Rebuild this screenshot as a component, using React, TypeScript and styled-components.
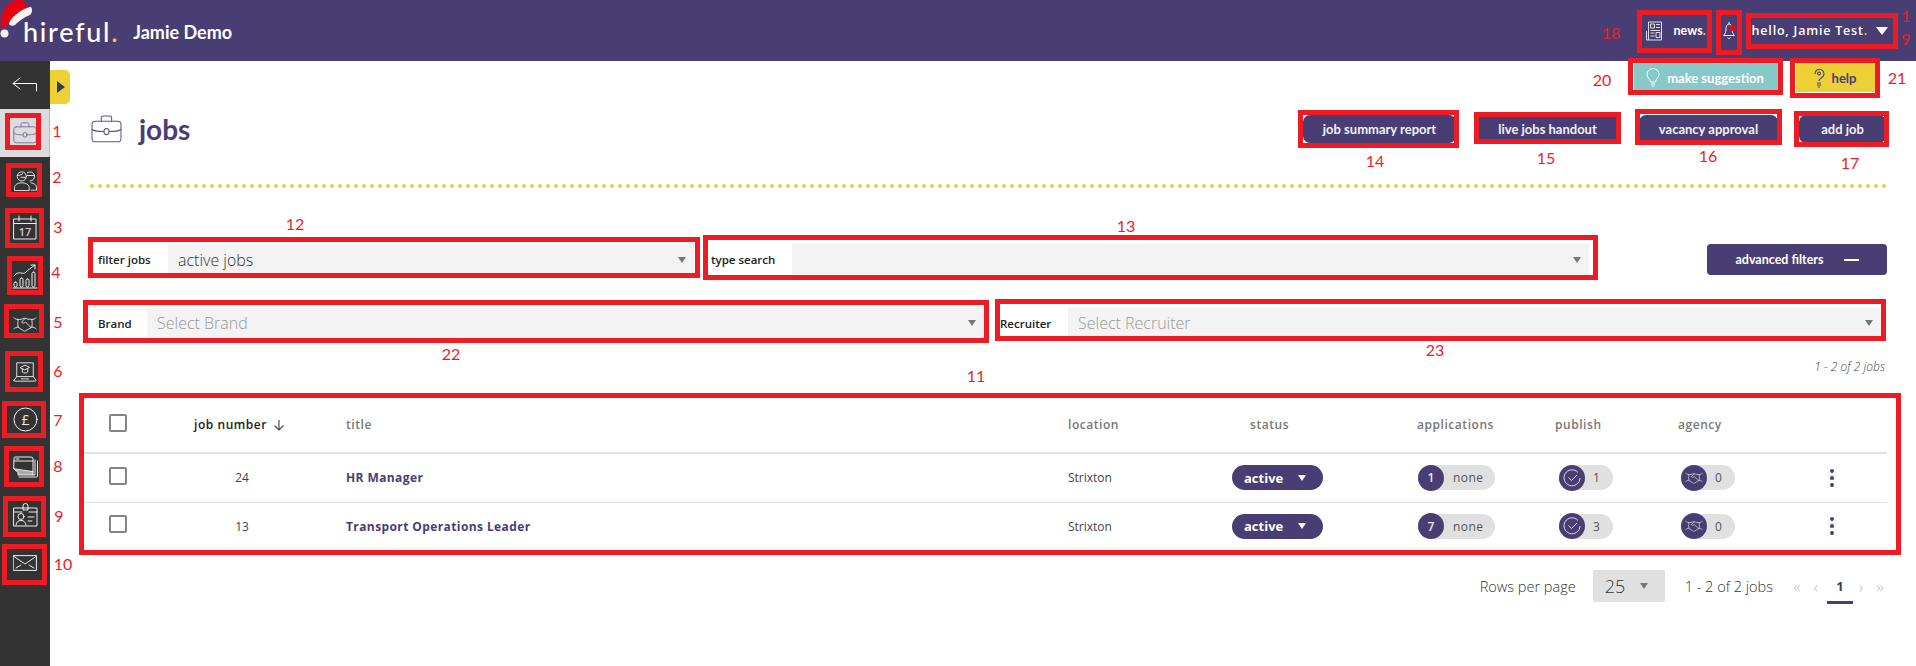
import styled, { createGlobalStyle } from "styled-components";

const PURPLE = "#493e74";
const YELLOW = "#edd035";
const RED = "#ed1c24";

const GlobalStyle = createGlobalStyle`
  html, body {
    margin: 0;
    height: 100%;
    overflow: hidden;
    background: #fff;
    font-family: "Open Sans", "Liberation Sans", sans-serif;
  }
`;

const Page = styled.div`
  position: relative;
  width: 1916px;
  height: 666px;
  overflow: hidden;
  display: flex;
  flex-direction: column;
`;

const Header = styled.header`
  height: 61px;
  background: ${PURPLE};
  display: flex;
  align-items: center;
  color: #fff;
  flex: none;
`;

const Logo = styled.div`
  margin-left: 23px;
  font-family: Lato, sans-serif;
  font-size: 27px;
  letter-spacing: 1.7px;
  line-height: 1;
  font-weight: 500;
  padding-top: 2px;
  span { color: ${YELLOW}; }
`;

const Company = styled.div`
  margin-left: 14px;
  padding-top: 2px;
  font-family: Lato, sans-serif;
  font-size: 18px;
  font-weight: 700;
`;

const News = styled.div`
  margin-left: auto;
  display: flex;
  align-items: center;
  gap: 12px;
  font-family: Lato, sans-serif;
  font-size: 12.5px;
  font-weight: 700;
  span { color: ${YELLOW}; }
`;

const Bell = styled.div`
  position: relative;
  margin-left: 17px;
  display: flex;
`;

const BellDot = styled.i`
  position: absolute;
  right: -1px;
  top: 4px;
  width: 6px;
  height: 6px;
  border-radius: 50%;
  background: #f00;
`;

const Hello = styled.div`
  margin: 0 28px 0 17px;
  display: flex;
  align-items: center;
  gap: 8px;
  font-family: "Open Sans", sans-serif;
  font-size: 12.5px;
  font-weight: 600;
  letter-spacing: 0.8px;
  span { color: ${YELLOW}; }
`;

const HelloCaret = styled.i`
  border-left: 6.5px solid transparent;
  border-right: 6.5px solid transparent;
  border-top: 8px solid #fff;
`;

const Body = styled.div`
  flex: 1;
  display: flex;
  min-height: 0;
`;

const Sidebar = styled.nav`
  width: 50px;
  flex: none;
  background: #333;
  display: flex;
  flex-direction: column;
`;

const BackItem = styled.div`
  height: 48px;
  display: flex;
  align-items: center;
  justify-content: center;
`;

const NavItem = styled.div<{ $active?: boolean }>`
  height: 47.8px;
  display: flex;
  align-items: center;
  justify-content: center;
  color: ${(p) => (p.$active ? "#6a6094" : "#eee")};
  background: ${(p) => (p.$active ? "#dcdcdc" : "transparent")};
  border-right: ${(p) => (p.$active ? "1px solid #bbb" : "none")};
`;

const Main = styled.main`
  position: relative;
  flex: 1;
  padding: 2px 30px 0 41px;
`;

const SideToggle = styled.div`
  position: absolute;
  left: 0;
  top: 9px;
  width: 20px;
  height: 34px;
  background: ${YELLOW};
  border-radius: 0 5px 5px 0;
  display: flex;
  align-items: center;
  justify-content: center;
  &::before {
    content: "";
    border-left: 8px solid #2c3e50;
    border-top: 6px solid transparent;
    border-bottom: 6px solid transparent;
    margin-left: 2px;
  }
`;

const TopActions = styled.div`
  display: flex;
  justify-content: flex-end;
  gap: 17px;
  height: 29px;
  margin-right: 11px;
`;

const TopButton = styled.div<{ $bg: string; $fg: string; $w: number }>`
  width: ${(p) => p.$w}px;
  height: 29px;
  background: ${(p) => p.$bg};
  color: ${(p) => p.$fg};
  display: flex;
  align-items: center;
  justify-content: center;
  gap: 7px;
  padding-right: 3px;
  box-sizing: border-box;
  font-family: Lato, sans-serif;
  font-size: 13px;
  font-weight: 700;
`;

const TitleRow = styled.div`
  display: flex;
  align-items: center;
  height: 28px;
  margin-top: 23px;
  color: #5b5189;
`;

const PageTitle = styled.h1`
  margin: 0 0 0 17px;
  font-family: Lato, sans-serif;
  font-size: 28px;
  font-weight: 700;
  color: ${PURPLE};
`;

const Actions = styled.div`
  margin-left: auto;
  display: flex;
  gap: 21px;
  margin-right: 1px;
`;

const ActionButton = styled.div<{ $w: number }>`
  width: ${(p) => p.$w}px;
  height: 28px;
  border-radius: 7px;
  background: ${PURPLE};
  color: #f1f0f5;
  display: flex;
  align-items: center;
  justify-content: center;
  font-family: Lato, sans-serif;
  font-size: 13px;
  font-weight: 700;
`;

const Dots = styled.div`
  height: 4px;
  margin-top: 41px;
  margin-left: -1px;
  background-image: radial-gradient(circle at 2px 2px, ${YELLOW} 1.8px, transparent 2.1px);
  background-size: 8px 4px;
  background-repeat: repeat-x;
`;

const FilterRow = styled.div<{ $top: number; $left: number }>`
  display: flex;
  align-items: stretch;
  height: ${(p) => (p.$top > 40 ? 31 : 30)}px;
  margin-top: ${(p) => p.$top}px;
  margin-left: ${(p) => p.$left}px;
`;

const Field = styled.div<{ $w: number; $gap?: number }>`
  width: ${(p) => p.$w}px;
  margin-right: ${(p) => p.$gap ?? 0}px;
  display: flex;
  flex: none;
`;

const FieldLabel = styled.label<{ $w: number; $pad: number }>`
  width: ${(p) => p.$w}px;
  padding-left: ${(p) => p.$pad}px;
  box-sizing: border-box;
  flex: none;
  display: flex;
  align-items: center;
  font-size: 11.5px;
  font-weight: 600;
  color: #222;
  white-space: nowrap;
`;

const FieldValue = styled.div<{ $muted?: boolean }>`
  flex: 1;
  background: #f3f3f3;
  display: flex;
  align-items: center;
  justify-content: space-between;
  padding: 0 8px 0 10px;
  font-size: 16px;
  font-weight: 300;
  color: ${(p) => (p.$muted ? "#999" : "#333")};
`;

const Caret = styled.i<{ $color?: string }>`
  border-left: 4.5px solid transparent;
  border-right: 4.5px solid transparent;
  border-top: 6px solid ${(p) => p.$color ?? "#777"};
`;

const AdvancedButton = styled.div`
  margin-left: auto;
  width: 180px;
  height: 31px;
  border-radius: 4px;
  background: ${PURPLE};
  color: #fff;
  display: flex;
  align-items: center;
  justify-content: center;
  gap: 20px;
  font-family: Lato, sans-serif;
  font-size: 12.5px;
  font-weight: 700;
  &::after {
    content: "";
    width: 15px;
    height: 2px;
    background: #fff;
  }
`;

const Summary = styled.div`
  margin-top: 21px;
  text-align: right;
  font-size: 12px;
  font-style: italic;
  font-weight: 300;
  color: #444;
  line-height: 15px;
  margin-right: 2px;
`;

const Table = styled.div`
  margin: 23px 0 0 -7px;
  width: 1803px;
`;

const Row = styled.div<{ $head?: boolean }>`
  display: grid;
  grid-template-columns: 110px 152px 722px 164px 185px 138px 123px 152px 57px;
  align-items: center;
  height: ${(p) => (p.$head ? 55 : 47.5)}px;
  border-bottom: ${(p) => (p.$head ? "2px" : "1.5px")} solid #e2e2e2;
  font-size: 12px;
  color: #444;
  &:last-child { border-bottom: none; }
`;

const CheckCell = styled.div`
  padding-left: 25px;
  display: flex;
`;

const Check = styled.span`
  width: 14px;
  height: 14px;
  border: 2px solid #848484;
  border-radius: 2px;
  margin-bottom: 4px;
`;

const Head = styled.div<{ $dark?: boolean; $pad?: number }>`
  font-weight: 600;
  letter-spacing: 0.55px;
  color: ${(p) => (p.$dark ? "#222" : "#777")};
  padding-left: ${(p) => p.$pad ?? 0}px;
  white-space: nowrap;
  display: flex;
  align-items: center;
  gap: 6px;
`;

const NumberCell = styled.div`
  width: 96px;
  text-align: center;
`;

const TitleCell = styled.div`
  font-weight: 700;
  letter-spacing: 0.4px;
  color: ${PURPLE};
`;

const StatusPill = styled.div`
  width: 91px;
  height: 25px;
  border-radius: 13px;
  background: ${PURPLE};
  color: #fff;
  box-sizing: border-box;
  padding: 0 17px 0 12px;
  display: flex;
  align-items: center;
  justify-content: space-between;
  font-size: 13px;
  font-weight: 700;
`;

const Pill = styled.div<{ $w: number; $left?: number }>`
  width: ${(p) => p.$w}px;
  margin-left: ${(p) => p.$left ?? 0}px;
  height: 25px;
  border-radius: 13px;
  background: #e0e0e0;
  display: flex;
  align-items: center;
  color: #555;
`;

const PillBadge = styled.div`
  width: 26px;
  height: 26px;
  border-radius: 50%;
  background: ${PURPLE};
  color: #e8e6f0;
  flex: none;
  display: flex;
  align-items: center;
  justify-content: center;
  font-weight: 600;
`;

const PillText = styled.span<{ $gap: number }>`
  margin-left: ${(p) => p.$gap}px;
  letter-spacing: 0.4px;
`;

const Kebab = styled.div`
  display: flex;
  flex-direction: column;
  gap: 3px;
  width: 4px;
  i {
    width: 4px;
    height: 4px;
    border-radius: 50%;
    background: ${PURPLE};
  }
`;

const Footer = styled.div`
  display: flex;
  align-items: center;
  justify-content: flex-end;
  margin-top: 20px;
  height: 32px;
  margin-right: -4px;
  font-size: 14.5px;
  font-weight: 300;
  color: #333;
`;

const RowsSelect = styled.div`
  width: 72px;
  height: 32px;
  margin: 0 20px 0 17px;
  box-sizing: border-box;
  padding: 0 17px 0 12px;
  border-radius: 2px;
  background: #e0e0e0;
  display: flex;
  align-items: center;
  justify-content: space-between;
  font-size: 18px;
`;

const Pager = styled.div`
  margin-left: 17px;
  display: flex;
  align-items: center;
  height: 32px;
  color: #bdbdbd;
  font-size: 17px;
`;

const PagerArrow = styled.span<{ $w: number }>`
  width: ${(p) => p.$w}px;
  text-align: center;
`;

const PagerCurrent = styled.span`
  position: relative;
  width: 26px;
  margin-left: -1px;
  text-align: center;
  font-size: 13px;
  font-weight: 700;
  color: #444;
  &::after {
    content: "";
    position: absolute;
    left: 0;
    right: 0;
    top: 24px;
    height: 3px;
    background: ${PURPLE};
  }
`;

const HatSvg = styled.svg`
  position: absolute;
  left: 0;
  top: 0;
`;

const MarkBox = styled.div<{ $x: number; $y: number; $r: number; $b: number }>`
  position: absolute;
  left: ${(p) => p.$x}px;
  top: ${(p) => p.$y}px;
  width: ${(p) => p.$r - p.$x}px;
  height: ${(p) => p.$b - p.$y}px;
  box-sizing: border-box;
  border: 5px solid ${RED};
  pointer-events: none;
`;

const MarkNumber = styled.span<{ $x: number; $y: number }>`
  position: absolute;
  left: ${(p) => p.$x}px;
  top: ${(p) => p.$y}px;
  transform: translate(-50%, -50%);
  font-family: Lato, sans-serif;
  font-size: 16px;
  line-height: 1;
  color: ${RED};
`;

const boxes = [
  [5, 113, 41, 150], [6, 163, 42, 197], [5, 208, 44, 248], [7, 256, 43, 295], [4, 304, 44, 338],
  [5, 351, 43, 392], [2, 401, 46, 438], [4, 446, 44, 487], [3, 496, 46, 537], [2, 544, 47, 585],
  [79, 393, 1901, 555], [88, 237, 700, 278], [703, 235, 1598, 280], [83, 300, 989, 343], [995, 299, 1886, 341],
  [1298, 110, 1459, 148], [1474, 112, 1621, 144], [1635, 109, 1782, 145], [1794, 111, 1889, 147],
  [1637, 10, 1712, 53], [1716, 10, 1742, 55], [1746, 13, 1898, 49], [1628, 58, 1783, 95], [1790, 58, 1880, 98],
];

const numbers: [string, number, number][] = [
  ["1", 57, 131], ["2", 57, 177], ["3", 58, 227], ["4", 56, 272], ["5", 58, 322], ["6", 58, 371],
  ["7", 58, 420], ["8", 58, 466], ["9", 59, 516], ["10", 63, 564], ["11", 976, 376], ["12", 295, 224],
  ["13", 1126, 226], ["14", 1375, 161], ["15", 1546, 158], ["16", 1708, 156], ["17", 1850, 163],
  ["18", 1611, 33], ["1", 1906, 16], ["9", 1906, 39], ["20", 1602, 80], ["21", 1897, 78], ["22", 451, 354], ["23", 1435, 350],
];

const strokeProps = {
  fill: "none",
  stroke: "currentColor",
  strokeWidth: 1,
  strokeLinecap: "round" as const,
  strokeLinejoin: "round" as const,
};

function BackArrow() {
  return (
    <svg width="26" height="16" viewBox="0 0 26 16" color="#fff" {...strokeProps}>
      <path d="M8 1 1 6.5 8 12M1 6.5h23.5V14" />
    </svg>
  );
}

function Briefcase({ size = 24 }: { size?: number }) {
  return (
    <svg width={size} height={size * 0.9} viewBox="0 0 30 27" {...strokeProps}>
      <path d="M10 6V3a2 2 0 0 1 2-2h6a2 2 0 0 1 2 2v3" />
      <rect x="1" y="6" width="28" height="20" rx="3" />
      <path d="M1 14c2 1.5 5 2 11.5 2M17.500 16c6.500 0 9.500-.5 11.500-2" />
      <ellipse cx="15" cy="16" rx="2.500" ry="3" />
    </svg>
  );
}

function People() {
  return (
    <svg width="25" height="22" viewBox="0 0 26 24" {...strokeProps}>
      <circle cx="9" cy="7" r="5" />
      <path d="M4 6c3 0 5-1 6-2M8 8h5" />
      <path d="M1 22v-3c0-3 4-5 8-5s8 2 8 5v3z" />
      <path d="M15 3a5 5 0 1 1 3 9M15 6h7" />
      <path d="M19 14c3 .5 6 2 6 5v3h-6" />
    </svg>
  );
}

function Calendar() {
  return (
    <svg width="26" height="26" viewBox="0 0 26 26" {...strokeProps}>
      <rect x="2" y="4" width="22" height="20" />
      <path d="M2 8.500h22M7 1v5M19 1v5" />
      <text x="13" y="21" textAnchor="middle" fontFamily="Open Sans" fontSize="11" fontWeight="600" fill="#ccc" stroke="none">17</text>
    </svg>
  );
}

function Chart() {
  return (
    <svg width="26" height="25" viewBox="0 0 26 25" {...strokeProps}>
      <path d="M1 24h24" />
      <rect x="2" y="18" width="3" height="5" rx="1.500" />
      <rect x="8" y="14" width="3" height="9" rx="1.500" />
      <rect x="14" y="15" width="3" height="8" rx="1.500" />
      <rect x="20" y="8" width="3" height="15" rx="1.500" />
      <path d="M2 12c3-4 5-3 7-3s3 1 5-1 5-4 9-7M19 1h4v4" />
    </svg>
  );
}

function Handshake({ size = 24 }: { size?: number }) {
  return (
    <svg width={size} height={size * 0.68} viewBox="0 0 28 19" {...strokeProps}>
      <path d="M1 2c1.500 1.500 3 2 5 2-.5 3-.5 6 0 9-2 0-3.500.5-5 2" />
      <path d="M27 2c-1.500 1.500-3 2-5 2 .5 3 .5 6 0 9 2 0 3.500.5 5 2" />
      <path d="M6 4c3 0 4 0 7-1.500 3 1 6 1.500 9 1.500" />
      <path d="M14 3 10 7c1 2 3 1.500 4.500 0l6.500 6.500" />
      <path d="M6 13l6 4c1 1 2 1 3 0l7-4" />
    </svg>
  );
}

function Laptop() {
  return (
    <svg width="24" height="22" viewBox="0 0 26 24" {...strokeProps}>
      <path d="M4 17V2h18v15M1 21l3-4h18l3 4a1 1 0 0 1-1 1H2a1 1 0 0 1-1-1zM9 19.500h8" />
      <path d="M8 7l5-2.500L18 7l-5 2.500zM10 8.500V12c2 1.500 4 1.500 6 0V8.500" />
    </svg>
  );
}

function Pound() {
  return (
    <svg width="25" height="25" viewBox="0 0 25 25" {...strokeProps}>
      <circle cx="12.500" cy="12.500" r="11.500" />
      <text x="12.500" y="17.500" textAnchor="middle" fontFamily="Open Sans" fontSize="14" fill="currentColor" stroke="none">£</text>
    </svg>
  );
}

function Windows() {
  return (
    <svg width="25" height="22" viewBox="0 0 25 22" {...strokeProps}>
      <path d="M1 2a1 1 0 0 1 1-1h16a2 2 0 0 1 2 2v13H5l-4-3z" />
      <path d="M1 5h19M3 3h3" />
      <path d="M1 13l4 3v3h15v-3z" fill="#aaa" />
      <path d="M22 4v15h-2M24.500 5v15a1 1 0 0 1-1 1H6" />
    </svg>
  );
}

function IdCard() {
  return (
    <svg width="25" height="24" viewBox="0 0 25 24" {...strokeProps}>
      <rect x="1" y="5" width="23" height="18" />
      <path d="M1 9h8M16 9h8M10 5V3a2.500 2.500 0 0 1 5 0v2M10 5v2h5V5" />
      <circle cx="8" cy="13.500" r="3" />
      <path d="M3 22c.5-3 2-4.500 5-4.500s4.500 1.500 5 4.500M15 14h6M15 18h4" />
    </svg>
  );
}

function Envelope() {
  return (
    <svg width="24" height="16" viewBox="0 0 24 16" {...strokeProps}>
      <rect x="0.600" y="0.600" width="22.800" height="14.800" />
      <path d="M1 1.500 12 9 23 1.500M3 13l5-3M21 13l-5-3" />
    </svg>
  );
}

function NewsIcon() {
  return (
    <svg width="16" height="20" viewBox="0 0 16 20" fill="none" stroke="#ddd" strokeWidth="1">
      <path d="M2.500 1h13v18h-13zM.5 10v9h2" />
      <path d="M4.500 3h4v4h-4zM10 3.500h4M10 6.500h4M4.500 9.500h9.500M4.500 12h4M10 11.500h4v5h-4zM4.500 15h4" />
    </svg>
  );
}

function BellIcon() {
  return (
    <svg width="12" height="19" viewBox="0 0 12 19" fill="none" stroke="#eee" strokeWidth="1">
      <path d="M6 1v2M6 3C3.500 3 3 6 3 8c0 3-1 5-2.500 6.500h11C10 13 9 11 9 8c0-2-.5-5-3-5zM4.500 16.500c1 1.500 2 1.500 3 0" />
    </svg>
  );
}

function BulbIcon() {
  return (
    <svg width="14" height="20" viewBox="0 0 14 20" fill="none" stroke="#fff" strokeWidth="1">
      <path d="M4.500 14C4.500 11 1 10 1 6.500a6 6 0 0 1 12 0C13 10 9.500 11 9.500 14zM5 16h4M5.500 18h3" />
    </svg>
  );
}

function HelpIcon() {
  return (
    <svg width="12" height="20" viewBox="0 0 12 20" fill="none" stroke={PURPLE} strokeWidth="1.100">
      <path d="M2 6a4.500 4.500 0 1 1 7 3.500C7.500 10.500 6 11 6 13" />
      <circle cx="6" cy="5.500" r="1.500" />
      <path d="M4 15h4M4 17h4M5 19h2" />
    </svg>
  );
}

function CheckRing() {
  return (
    <svg width="18" height="18" viewBox="0 0 18 18" fill="none" stroke="#ddd" strokeWidth="1">
      <path d="M15 3.500A8 8 0 1 0 17 9" />
      <path d="M5.500 8.500 8.500 11.500 14 6" />
    </svg>
  );
}

function DownArrow() {
  return (
    <svg width="12" height="12" viewBox="0 0 12 12" fill="none" stroke="#444" strokeWidth="1.100">
      <path d="M6 1v10M1.500 6.500 6 11l4.500-4.500" />
    </svg>
  );
}

const jobs = [
  { number: 24, title: "HR Manager", location: "Strixton", applications: 1, publish: 1, agency: 0 },
  { number: 13, title: "Transport Operations Leader", location: "Strixton", applications: 7, publish: 3, agency: 0 },
];

const navIcons = [<Briefcase />, <People />, <Calendar />, <Chart />, <Handshake />, <Laptop />, <Pound />, <Windows />, <IdCard />, <Envelope />];

function SantaHat() {
  return (
    <HatSvg width="34" height="38" viewBox="0 0 34 38">
      <defs>
        <filter id="fur"><feGaussianBlur stdDeviation="0.6" /></filter>
      </defs>
      <path d="M1 30C-1 12 8 0 18 0c5 0 8 2 9 6L12 22l-6 3z" fill="#e8000f" />
      <path d="M9 24C10 18 22 8 31 7c2 3 1 6-1 8C24 17 18 22 15 25c-2 1-5 1-6-1z" fill="#f4f1ee" filter="url(#fur)" />
      <circle cx="4.500" cy="33.500" r="4" fill="#f4f1ee" filter="url(#fur)" />
    </HatSvg>
  );
}

export default function App() {
  return (
    <Page>
      <GlobalStyle />
      <Header>
        <Logo>hireful<span>.</span></Logo>
        <Company>Jamie Demo</Company>
        <News>
          <NewsIcon />
          <div>news<span>.</span></div>
        </News>
        <Bell>
          <BellIcon />
          <BellDot />
        </Bell>
        <Hello>
          <div>hello, Jamie Test<span>.</span></div>
          <HelloCaret />
        </Hello>
      </Header>
      <SantaHat />
      <Body>
        <Sidebar>
          <BackItem><BackArrow /></BackItem>
          {navIcons.map((icon, i) => (
            <NavItem key={i} $active={i === 0}>{icon}</NavItem>
          ))}
        </Sidebar>
        <Main>
          <SideToggle />
          <TopActions>
            <TopButton $bg="#87c8c8" $fg="#fff" $w={145}><BulbIcon />make suggestion</TopButton>
            <TopButton $bg={YELLOW} $fg={PURPLE} $w={80}><HelpIcon />help</TopButton>
          </TopActions>
          <TitleRow>
            <Briefcase size={31} />
            <PageTitle>jobs</PageTitle>
            <Actions>
              <ActionButton $w={153}>job summary report</ActionButton>
              <ActionButton $w={141}>live jobs handout</ActionButton>
              <ActionButton $w={139}>vacancy approval</ActionButton>
              <ActionButton $w={87}>add job</ActionButton>
            </Actions>
          </TitleRow>
          <Dots />
          <FilterRow $top={56} $left={2}>
            <Field $w={601} $gap={14}>
              <FieldLabel $w={75} $pad={5}>filter jobs</FieldLabel>
              <FieldValue>active jobs<Caret /></FieldValue>
            </Field>
            <Field $w={881}>
              <FieldLabel $w={84} $pad={3}>type search</FieldLabel>
              <FieldValue><span /><Caret /></FieldValue>
            </Field>
            <AdvancedButton>advanced filters</AdvancedButton>
          </FilterRow>
          <FilterRow $top={33} $left={7}>
            <Field $w={886} $gap={16}>
              <FieldLabel $w={49} $pad={0}>Brand</FieldLabel>
              <FieldValue $muted>Select Brand<Caret /></FieldValue>
            </Field>
            <Field $w={881}>
              <FieldLabel $w={68} $pad={0}>Recruiter</FieldLabel>
              <FieldValue $muted>Select Recruiter<Caret /></FieldValue>
            </Field>
          </FilterRow>
          <Summary>1 - 2 of 2 jobs</Summary>
          <Table>
            <Row $head>
              <CheckCell><Check /></CheckCell>
              <Head $dark>job number <DownArrow /></Head>
              <Head>title</Head>
              <Head>location</Head>
              <Head $pad={18}>status</Head>
              <Head>applications</Head>
              <Head>publish</Head>
              <Head>agency</Head>
              <div />
            </Row>
            {jobs.map((job) => (
              <Row key={job.number}>
                <CheckCell><Check /></CheckCell>
                <NumberCell>{job.number}</NumberCell>
                <TitleCell>{job.title}</TitleCell>
                <div>{job.location}</div>
                <StatusPill>active<Caret $color="#fff" /></StatusPill>
                <Pill $w={77} $left={1}>
                  <PillBadge>{job.applications}</PillBadge>
                  <PillText $gap={9}>none</PillText>
                </Pill>
                <Pill $w={54} $left={4}>
                  <PillBadge><CheckRing /></PillBadge>
                  <PillText $gap={8}>{job.publish}</PillText>
                </Pill>
                <Pill $w={54} $left={3}>
                  <PillBadge><Handshake size={18} /></PillBadge>
                  <PillText $gap={8}>{job.agency}</PillText>
                </Pill>
                <Kebab><i /><i /><i /></Kebab>
              </Row>
            ))}
          </Table>
          <Footer>
            Rows per page
            <RowsSelect>25<Caret /></RowsSelect>
            1 - 2 of 2 jobs
            <Pager>
              <PagerArrow $w={14}>«</PagerArrow>
              <PagerArrow $w={24}>‹</PagerArrow>
              <PagerCurrent>1</PagerCurrent>
              <PagerArrow $w={16}>›</PagerArrow>
              <PagerArrow $w={22}>»</PagerArrow>
            </Pager>
          </Footer>
        </Main>
      </Body>
      {boxes.map(([x, y, r, b]) => (
        <MarkBox key={`${x}-${y}`} $x={x} $y={y} $r={r} $b={b} />
      ))}
      {numbers.map(([label, x, y]) => (
        <MarkNumber key={`${x}-${y}`} $x={x} $y={y}>{label}</MarkNumber>
      ))}
    </Page>
  );
}
